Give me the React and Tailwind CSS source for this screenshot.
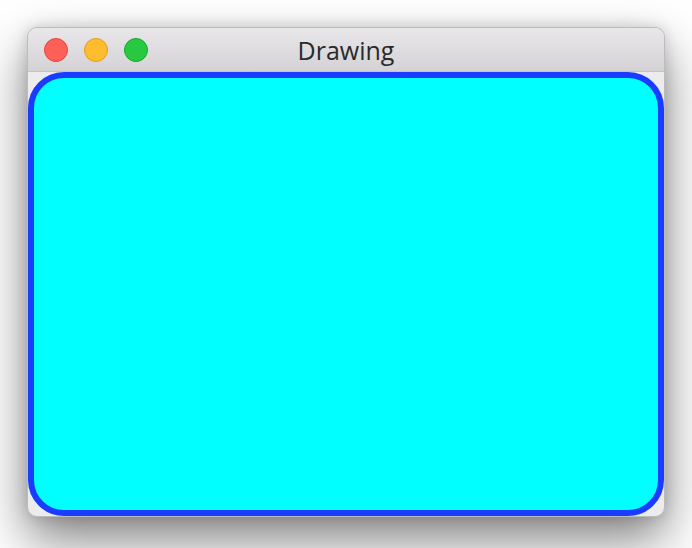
import React from "react";

const App = () => {
  return (
    <div className="w-[692px] h-[548px] bg-white pt-[27px] pl-[27px] overflow-hidden">
      <div className="w-[638px] h-[490px] rounded-[10px] border border-[#bcbcbc] bg-[#ececec] flex flex-col overflow-hidden shadow-[0_22px_50px_rgba(0,0,0,0.5),0_0_14px_rgba(0,0,0,0.15)]">
        {/* title bar */}
        <div className="relative h-[44px] shrink-0 border-b border-[#c4c2c4] bg-gradient-to-b from-[#e9e7e9] to-[#d4d2d4] flex items-center">
          <div className="flex items-center gap-[16px] pl-[16px] pt-[1px]">
            <span className="w-[24px] h-[24px] rounded-full bg-[#fe5f57] border border-[#e2463f]" />
            <span className="w-[24px] h-[24px] rounded-full bg-[#febc2e] border border-[#e1a116]" />
            <span className="w-[24px] h-[24px] rounded-full bg-[#28c840] border border-[#17a92b]" />
          </div>
          <div
            className="absolute inset-0 flex items-center justify-center text-[25px] text-[#2a2a2a] pt-[2px]"
            style={{ fontFamily: "'Open Sans', 'Noto Sans', sans-serif" }}
          >
            Drawing
          </div>
        </div>
        {/* canvas */}
        <div className="flex-1 flex">
          <div className="flex-1 rounded-[36px] border-[6px] border-[#1a3cff] bg-[#00ffff]" />
        </div>
      </div>
    </div>
  );
};

export default App;
